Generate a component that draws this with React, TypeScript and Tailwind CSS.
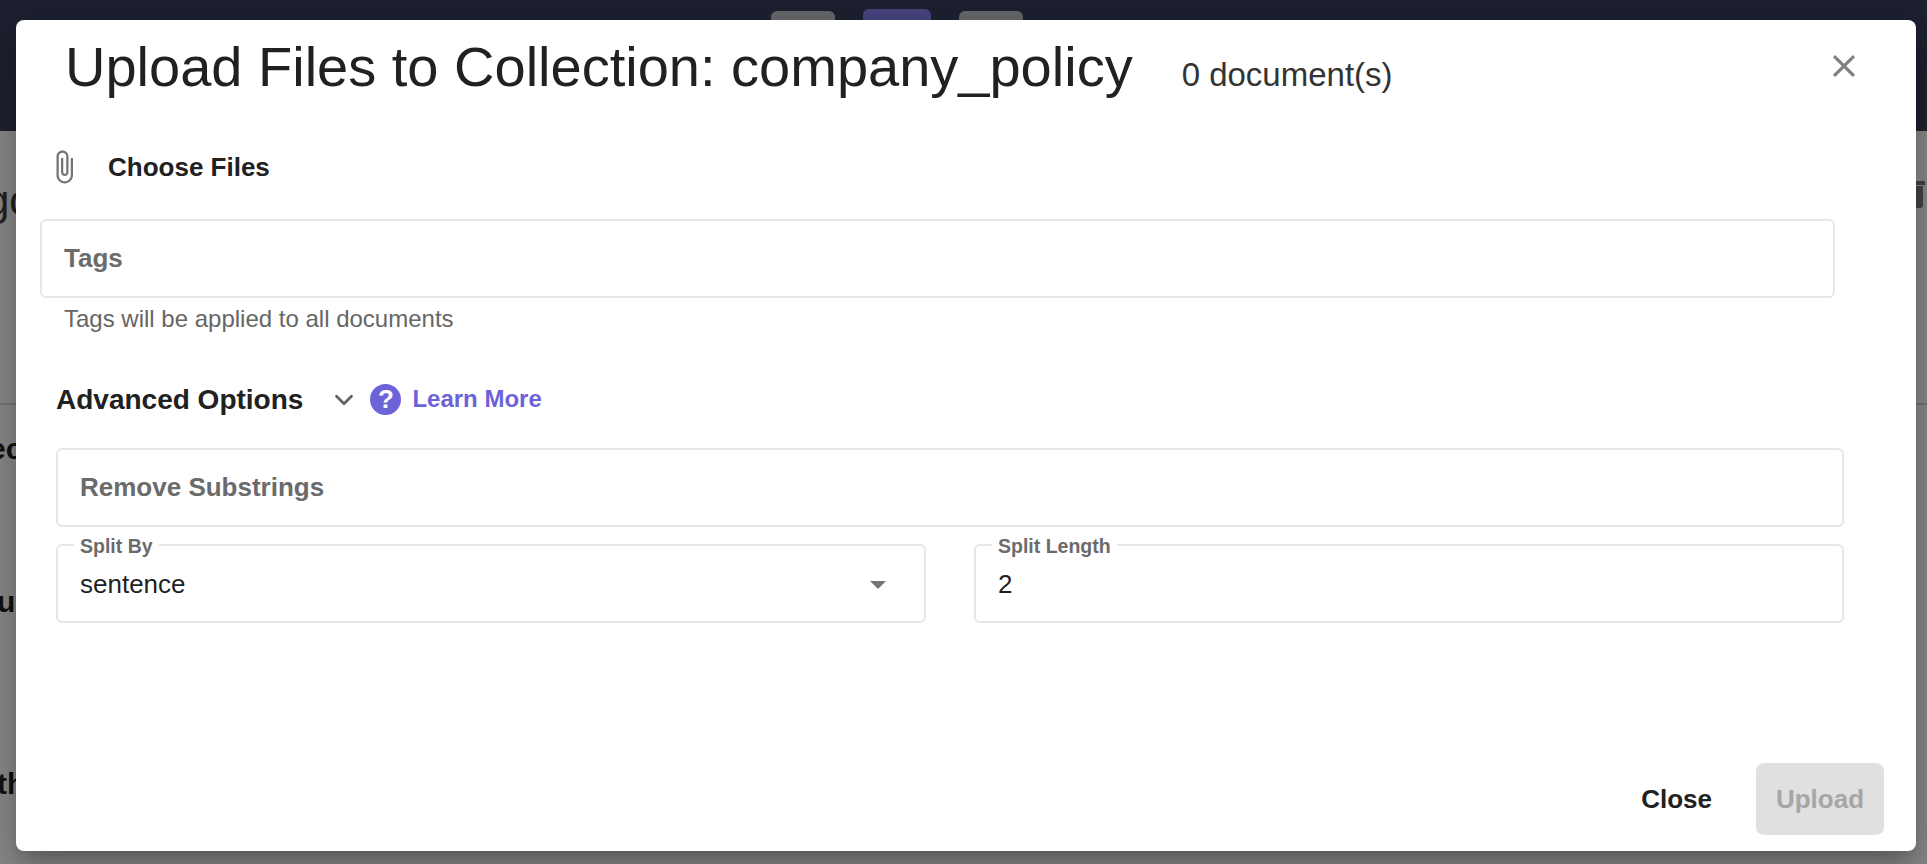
import React from 'react';
import { ChevronDown } from 'lucide-react';

const font = { fontFamily: '"Liberation Sans", Arial, sans-serif' };

const OutlinedField = ({ label, value, arrow }: { label: string; value?: string; arrow?: boolean }) => {
  if (!value) {
    return (
      <div className="flex h-[79px] items-center rounded-[6px] border-2 border-[#e6e6e6] px-[22px]">
        <span className="text-[26px] font-bold text-[#6b6b6b]">{label}</span>
      </div>
    );
  }
  return (
    <div className="relative flex h-[79px] flex-1 items-center rounded-[6px] border-2 border-[#e6e6e6] pl-[22px] pr-[30px]">
      <span className="absolute left-[16px] top-[-10px] bg-white px-[6px] text-[19.5px] font-bold leading-[20px] text-[#6b6b6b]">{label}</span>
      <span className="mt-[1px] flex-1 text-[26px] text-[#1f1f1f]">{value}</span>
      {arrow && <div className="mr-[8px] mt-[2px] h-0 w-0 border-x-[8px] border-t-[8px] border-x-transparent border-t-[#757575]" />}
    </div>
  );
};

export default function App() {
  return (
    <div className="relative flex h-[864px] w-[1927px] flex-col overflow-hidden bg-[#8a8a8a]" style={font}>
      {/* page behind the dialog */}
      <div className="flex h-[131px] gap-[28px] bg-[#1e2130] pl-[771px] pt-[11px]">
        <div className="h-[30px] w-[64px] rounded-[6px] bg-[#67686c]" />
        <div className="-mt-[2px] h-[32px] w-[68px] rounded-[6px] bg-[#484480]" />
        <div className="h-[30px] w-[64px] rounded-[6px] bg-[#67686c]" />
      </div>
      <div className="relative flex-1 text-[30px] font-bold text-[#111]">
        <span className="absolute left-[-14px] top-[38px] text-[42px] font-normal text-[#222]">go</span>
        <div className="absolute left-0 right-0 top-[272px] h-[2px] bg-[#757575]" />
        <span className="absolute left-[-11px] top-[295px]">ec</span>
        <span className="absolute left-[-3px] top-[448px]">u</span>
        <span className="absolute left-[-3px] top-[630px]">th</span>
        <div className="absolute left-[1916px] top-[50px] h-[4px] w-[9px] bg-[#444]" />
        <div className="absolute left-[1916px] top-[55px] h-[22px] w-[7px] rounded-br-[3px] bg-[#444]" />
      </div>

      {/* dialog */}
      <div className="absolute left-[16px] top-[20px] flex h-[831px] w-[1900px] flex-col rounded-[8px] bg-white shadow-[0_11px_15px_-7px_rgba(0,0,0,0.2),0_24px_38px_3px_rgba(0,0,0,0.14),0_9px_46px_8px_rgba(0,0,0,0.12)]">
        <div className="flex h-[92px] items-start pl-[49px] pr-[53px] text-[#212121]">
          <h2 className="mt-[15px] text-[56px] font-normal leading-[64px]">Upload Files to Collection: company_policy</h2>
          <span className="ml-[49px] mt-[35px] text-[33px] font-normal leading-[40px] text-[#333]">0 document(s)</span>
          <svg className="ml-auto mt-[27px] text-[#808080]" width="38" height="38" viewBox="0 0 24 24" fill="currentColor">
            <path d="M19 6.41 17.59 5 12 10.59 6.41 5 5 6.41 10.59 12 5 17.59 6.41 19 12 13.41 17.59 19 19 17.59 13.41 12z" />
          </svg>
        </div>

        <div className="mt-[35px] flex h-[40px] items-center pl-[30px]">
          <svg className="text-[#757575]" width="36" height="36" viewBox="0 0 24 24" fill="currentColor">
            <path d="M16.5 6v11.5c0 2.21-1.79 4-4 4s-4-1.79-4-4V5c0-1.38 1.12-2.5 2.5-2.5s2.5 1.12 2.5 2.5v10.5c0 .55-.45 1-1 1s-1-.45-1-1V6H10v9.5c0 1.38 1.12 2.5 2.5 2.5s2.5-1.12 2.5-2.5V5c0-2.21-1.79-4-4-4S7 2.79 7 5v12.5c0 3.04 2.46 5.5 5.5 5.5s5.5-2.46 5.5-5.5V6h-1.5z" />
          </svg>
          <span className="ml-[26px] text-[26px] font-bold text-[#212121]">Choose Files</span>
        </div>

        <div className="ml-[24px] mr-[81px] mt-[32px]">
          <OutlinedField label="Tags" />
        </div>
        <p className="ml-[48px] mt-[8px] text-[24px] leading-[26px] text-[#666]">Tags will be applied to all documents</p>

        <div className="ml-[40px] mt-[48px] flex h-[40px] items-center">
          <span className="text-[28px] font-bold text-[#212121]">Advanced Options</span>
          <ChevronDown className="ml-[26px] text-[#666]" size={30} strokeWidth={2.25} />
          <div className="ml-[11px] -mt-[2px] flex h-[31px] w-[31px] items-center justify-center rounded-full bg-[#6c63d9] text-[26px] font-bold text-white">?</div>
          <span className="ml-[11px] -mt-[2px] text-[24px] font-bold text-[#6c63d9]">Learn More</span>
        </div>

        <div className="ml-[40px] mr-[72px] mt-[28px] flex flex-col gap-[17px]">
          <OutlinedField label="Remove Substrings" />
          <div className="flex gap-[48px]">
            <OutlinedField label="Split By" value="sentence" arrow />
            <OutlinedField label="Split Length" value="2" />
          </div>
        </div>

        <div className="mt-auto flex items-center justify-end gap-[44px] pb-[16px] pr-[32px]">
          <button className="text-[26px] font-bold text-[#212121]">Close</button>
          <button className="h-[72px] w-[128px] rounded-[8px] bg-[#e0e0e0] text-[26px] font-bold text-[#a6a6a6]">Upload</button>
        </div>
      </div>
    </div>
  );
}
